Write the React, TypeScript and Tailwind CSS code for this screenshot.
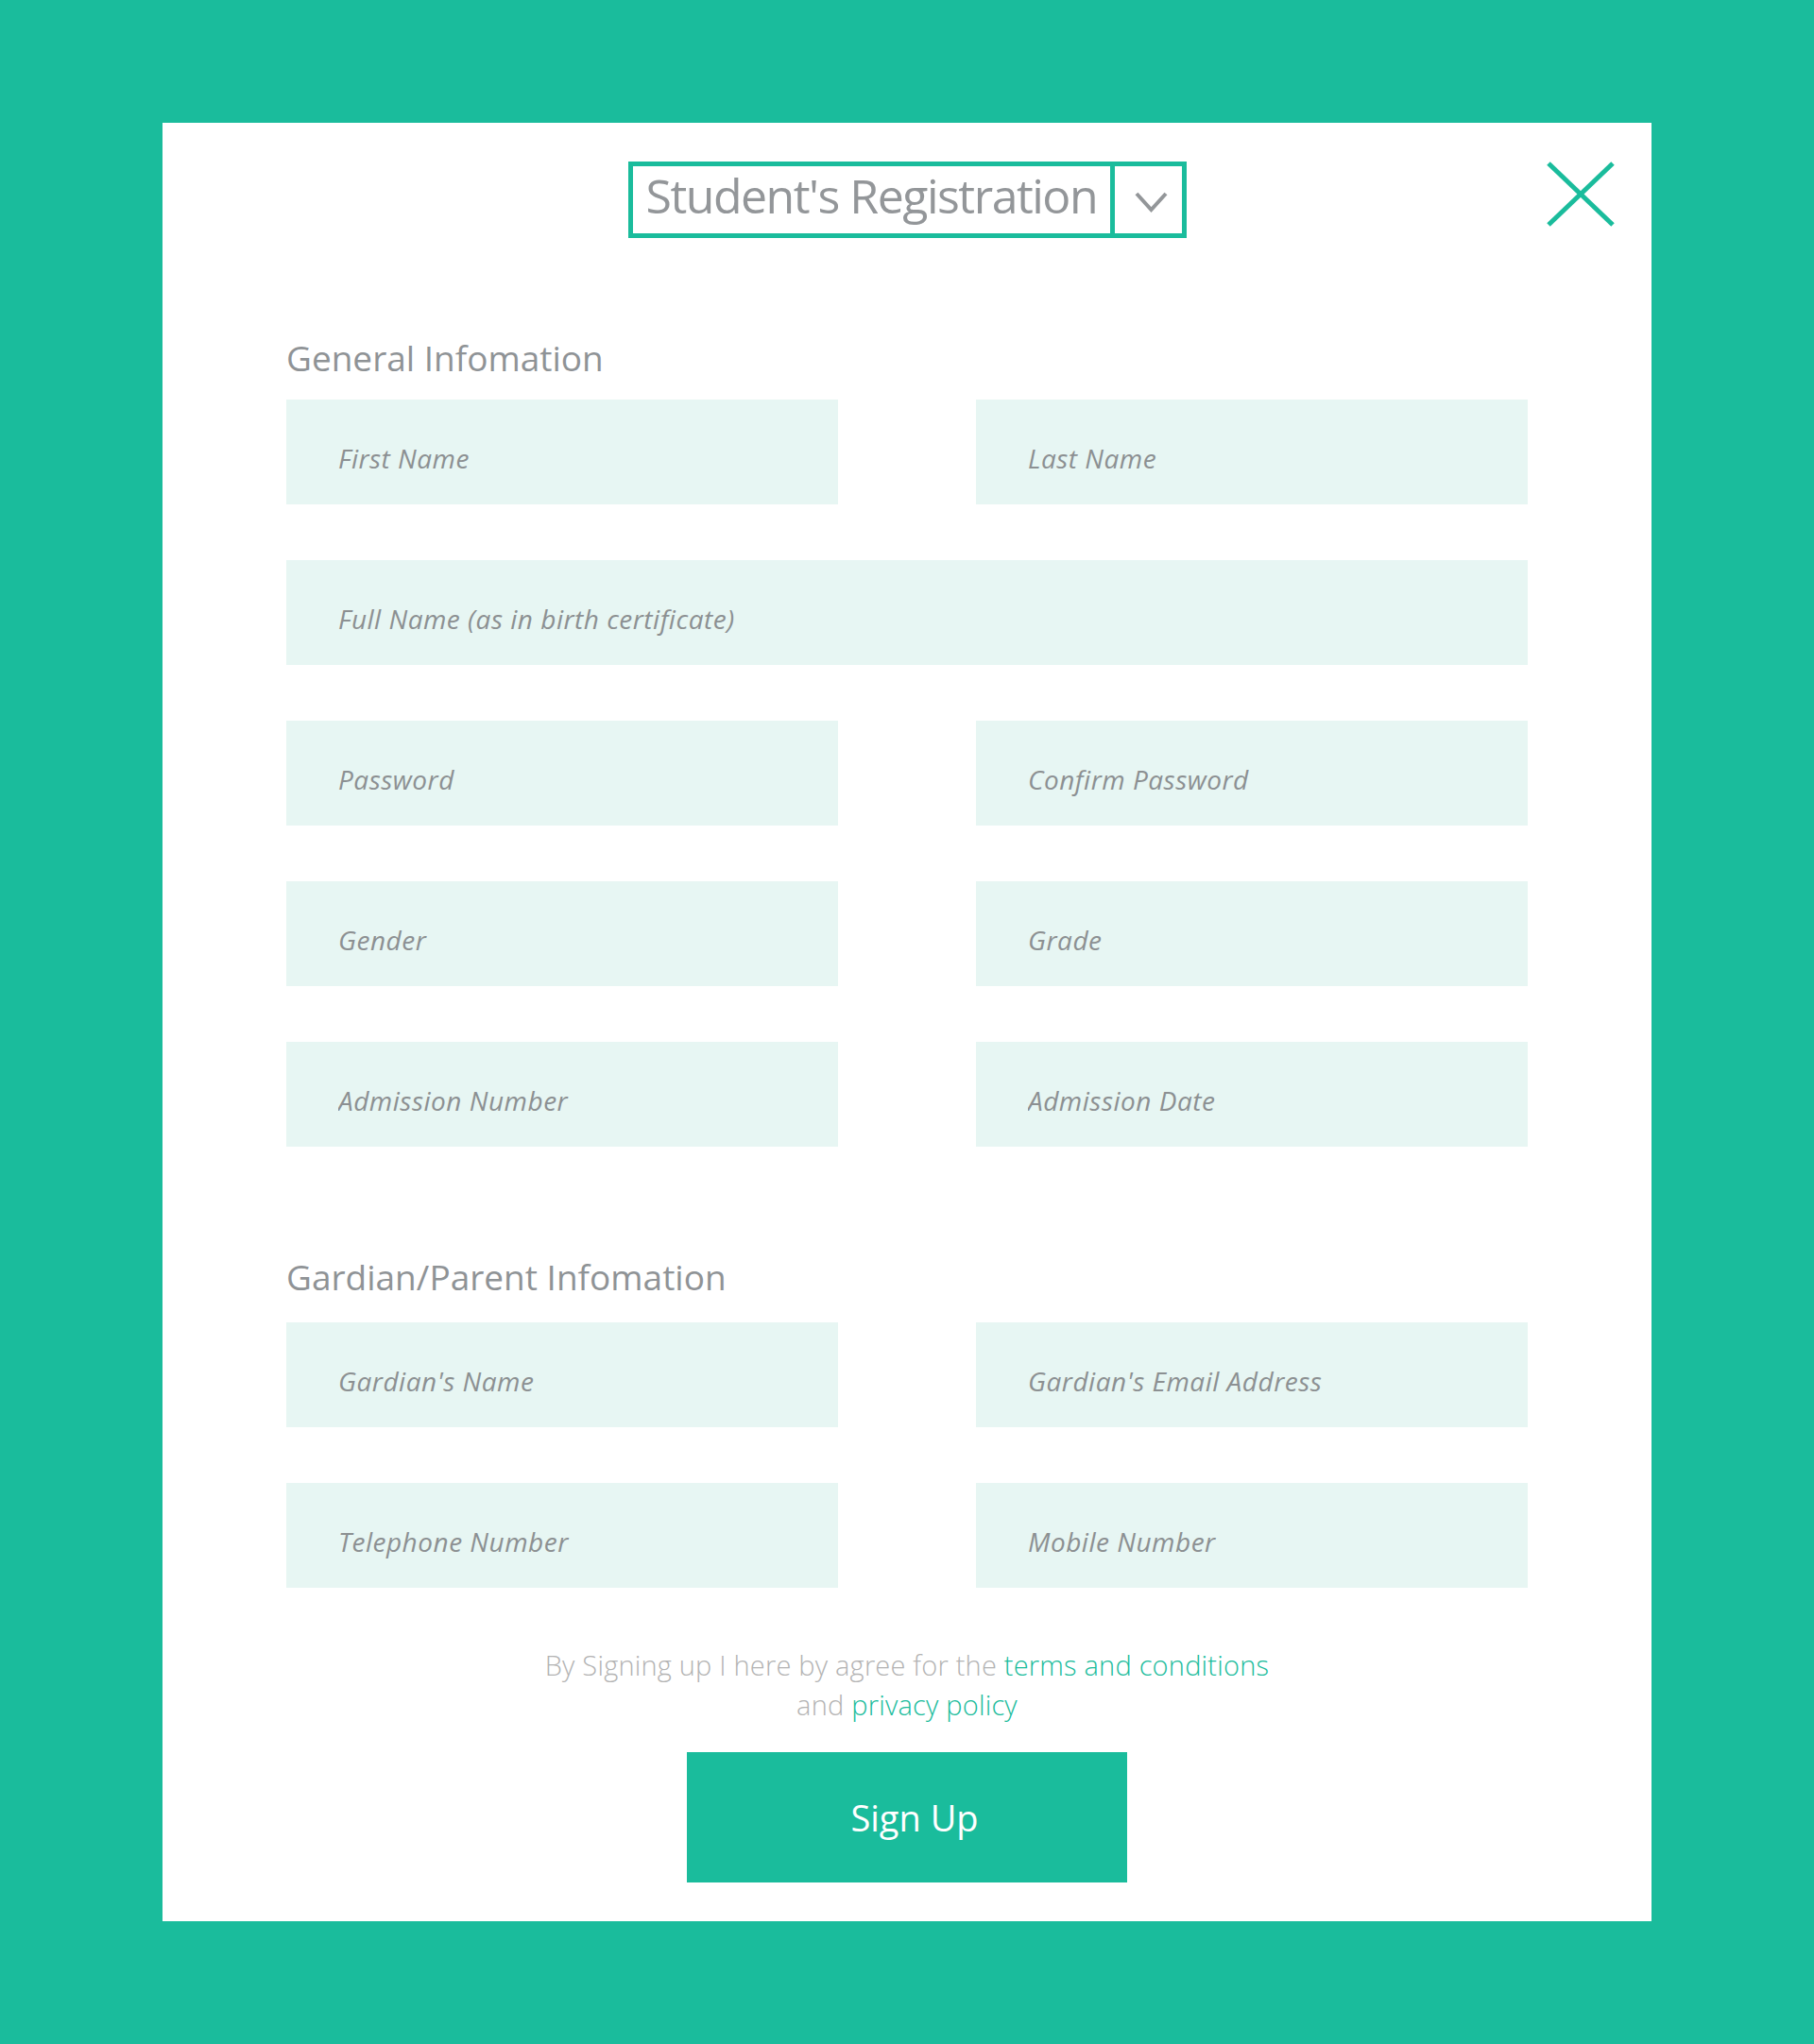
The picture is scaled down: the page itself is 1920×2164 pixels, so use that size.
import { useState } from 'react'

const general = [
  { name: 'firstName', label: 'First Name' },
  { name: 'lastName', label: 'Last Name' },
  { name: 'fullName', label: 'Full Name (as in birth certificate)', wide: true },
  { name: 'password', label: 'Password', type: 'password' },
  { name: 'confirmPassword', label: 'Confirm Password', type: 'password' },
  { name: 'gender', label: 'Gender' },
  { name: 'grade', label: 'Grade' },
  { name: 'admissionNumber', label: 'Admission Number' },
  { name: 'admissionDate', label: 'Admission Date' },
]

const guardian = [
  { name: 'guardianName', label: "Gardian's Name" },
  { name: 'guardianEmail', label: "Gardian's Email Address", type: 'email' },
  { name: 'telephone', label: 'Telephone Number' },
  { name: 'mobile', label: 'Mobile Number' },
]

type Field = { name: string; label: string; type?: string; wide?: boolean }

const FieldGrid = ({
  fields,
  values,
  onChange,
}: {
  fields: Field[]
  values: Record<string, string>
  onChange: (name: string, value: string) => void
}) => {
  return (
    <div className="grid grid-cols-2 gap-x-[146px] gap-y-[59px]">
      {fields.map((f) => (
        <input
          key={f.name}
          name={f.name}
          type={f.type || 'text'}
          placeholder={f.label}
          value={values[f.name] || ''}
          onChange={(e) => onChange(f.name, e.target.value)}
          className={`h-[111px] w-full bg-[#e7f6f3] pl-[55px] pt-[13px] text-[28px] italic tracking-[0.5px] text-[#6f7375] outline-none placeholder:text-[#8c9092] ${
            f.wide ? 'col-span-2' : ''
          }`}
        />
      ))}
    </div>
  )
}

export default function App() {
  const [values, setValues] = useState<Record<string, string>>({})

  const setValue = (name: string, value: string) => {
    setValues((v) => ({ ...v, [name]: value }))
  }

  return (
    <div className="min-h-screen bg-[#1abc9c] px-[172px] pt-[130px] pb-[131px] font-['Open_Sans',sans-serif]">
      <div className="relative bg-white px-[131px] pt-[41px] pb-[41px]">
        <button className="absolute top-[41px] right-[39px] h-[69px] w-[72px]" aria-label="Close">
          <svg width="72" height="69" viewBox="0 0 72 69">
            <line x1="2" y1="2" x2="70" y2="67" stroke="#1abc9c" strokeWidth="5" />
            <line x1="70" y1="2" x2="2" y2="67" stroke="#1abc9c" strokeWidth="5" />
          </svg>
        </button>

        <div className="flex justify-center">
          <div className="flex h-[81px] w-[591px] border-[5px] border-[#1abc9c]">
            <div className="flex flex-1 items-center pb-[9px] pl-[14px] text-[50px] leading-[50px] tracking-[-1.5px] text-[#939699]">
              Student's Registration
            </div>
            <div className="flex w-[76px] items-center justify-center border-l-[5px] border-[#1abc9c] pl-[6px] pt-[5px]">
              <svg width="35" height="22" viewBox="0 0 35 22">
                <polyline points="2,2 17.5,19 33,2" fill="none" stroke="#939699" strokeWidth="4" />
              </svg>
            </div>
          </div>
        </div>

        <h2 className="mt-[109px] mb-[26px] text-[37px] leading-[36px] text-[#8f9396]">
          General Infomation
        </h2>
        <FieldGrid fields={general} values={values} onChange={setValue} />

        <h2 className="mt-[120px] mb-[30px] text-[37px] leading-[36px] text-[#8f9396]">
          Gardian/Parent Infomation
        </h2>
        <FieldGrid fields={guardian} values={values} onChange={setValue} />

        <p className="mt-[61px] text-center text-[29px] leading-[42px] tracking-[0.2px] font-light text-[#b3b3b3]">
          By Signing up I here by agree for the{' '}
          <a href="#" className="text-[#1abc9c]">
            terms and conditions
          </a>
          <br />
          and{' '}
          <a href="#" className="text-[#1abc9c]">
            privacy policy
          </a>
        </p>

        <button className="mx-auto mt-[29px] block h-[138px] w-[466px] bg-[#1abc9c] pl-[16px] text-[38px] text-white">
          Sign Up
        </button>
      </div>
    </div>
  )
}
